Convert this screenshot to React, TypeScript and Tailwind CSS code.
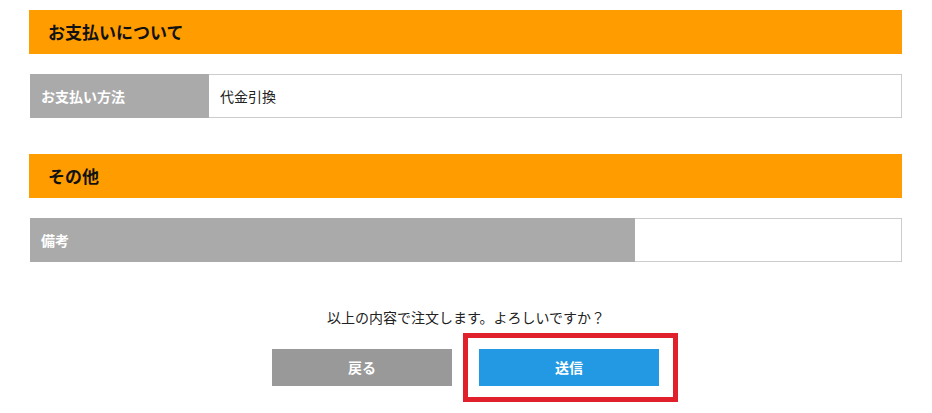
const font = { fontFamily: '"Noto Sans CJK JP", "Noto Sans", sans-serif' };

interface RowProps {
  label: string;
  value?: string;
  labelWidth: string;
}

const SectionTitle = ({ title }: { title: string }) => (
  <h2 className="h-[44px] bg-[#ff9c00] pl-[19px] flex items-center text-[17px] font-bold text-[#111]">
    {title}
  </h2>
);

const Row = ({ label, value, labelWidth }: RowProps) => (
  <div className="flex h-[44px]">
    <div className={`${labelWidth} shrink-0 bg-[#aaaaaa] flex items-center pl-[11px] text-[14px] font-bold text-white`}>
      {label}
    </div>
    <div className="flex-1 border border-l-0 border-[#cccccc] flex items-center pl-[11px] text-[14px] text-[#222]">
      {value}
    </div>
  </div>
);

export default function App() {
  return (
    <div className="w-[932px] h-[413px] bg-white overflow-hidden" style={font}>
      <div className="ml-[29px] w-[873px] pt-[10px]">
        <SectionTitle title="お支払いについて" />
        <div className="mt-[20px] pl-[1px]">
          <Row label="お支払い方法" value="代金引換" labelWidth="w-[179px]" />
        </div>

        <div className="mt-[36px]">
          <SectionTitle title="その他" />
        </div>
        <div className="mt-[20px] pl-[1px]">
          <Row label="備考" labelWidth="w-[605px]" />
        </div>

        <p className="mt-[45px] text-center text-[14px] text-[#222] pl-[1px]">
          以上の内容で注文します。よろしいですか？
        </p>

        <div className="mt-[21px] flex justify-center gap-[27px]">
          <button className="w-[180px] h-[37px] bg-[#999999] text-white text-[14px] font-bold">
            戻る
          </button>
          <div className="relative">
            <button className="w-[180px] h-[37px] bg-[#2299e2] text-white text-[14px] font-bold">
              送信
            </button>
            <div className="absolute -left-[16px] -top-[16px] w-[215px] h-[69px] border-[5px] border-[#e0212b] pointer-events-none" />
          </div>
        </div>
      </div>
    </div>
  );
}
